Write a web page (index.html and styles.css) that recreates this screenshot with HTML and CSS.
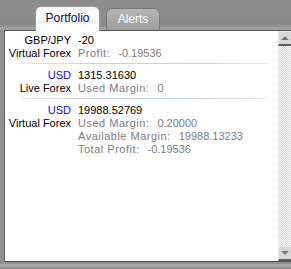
FILE: index.html
```html
<!DOCTYPE html>
<html lang="en">
<head>
  <meta charset="UTF-8">
  <title>Portfolio</title>
  <link rel="stylesheet" href="styles.css">
</head>
<body>
  <div class="tabs">
    <div class="tab active">Portfolio</div>
    <div class="tab">Alerts</div>
  </div>

  <div class="panel">
    <div class="content">
      <div class="row first">
        <div class="names">
          <div>GBP/JPY</div>
          <div>Virtual Forex</div>
        </div>
        <div class="values">
          <div class="num">-20</div>
          <div class="muted">Profit:<span class="val">-0.19536</span></div>
        </div>
      </div>
      <div class="sep"></div>

      <div class="row">
        <div class="names">
          <div class="cur">USD</div>
          <div>Live Forex</div>
        </div>
        <div class="values">
          <div class="num">1315.31630</div>
          <div class="muted">Used Margin:<span class="val">0</span></div>
        </div>
      </div>
      <div class="sep"></div>

      <div class="row">
        <div class="names">
          <div class="cur">USD</div>
          <div>Virtual Forex</div>
        </div>
        <div class="values">
          <div class="num">19988.52769</div>
          <div class="muted">Used Margin:<span class="val">0.20000</span></div>
          <div class="muted">Available Margin:<span class="val">19988.13233</span></div>
          <div class="muted">Total Profit:<span class="val">-0.19536</span></div>
        </div>
      </div>
    </div>

    <div class="scrollbar">
      <div class="arrow up"></div>
      <div class="track"></div>
      <div class="arrow down"></div>
    </div>
  </div>
  <div class="foot"></div>
</body>
</html>
```

FILE: styles.css
```css
body {
  margin: 0;
  background: #8f8f8f;
  font-family: "Liberation Sans", Arial, sans-serif;
  font-size: 11px;
  overflow: hidden;
}
.tabs {
  display: flex;
  align-items: flex-end;
  gap: 6px;
  height: 30px;
  padding-left: 35px;
  background: linear-gradient(#8c8c8c 0, #8c8c8c 20px, #888 24px, #a4a4a4 29px);
}
.tab {
  width: 52px;
  height: 21px;
  line-height: 21px;
  text-align: center;
  font-size: 12px;
  border: 1px solid #7a7a7a;
  border-bottom: none;
  border-radius: 6px 6px 0 0;
  background: linear-gradient(#b4b4b4, #9c9c9c);
  color: #fff;
}
.tab.active {
  width: 63px;
  height: 24px;
  line-height: 23px;
  border-color: #9a9a9a;
  background: linear-gradient(#f6f6f6 0, #fff 12px, #ececec 15px, #fff 18px);
  color: #10104a;
  position: relative;
  z-index: 1;
  margin-bottom: -1px;
}
.panel {
  display: flex;
  height: 230px;
  margin-left: 4px;
  border-top: 1px solid #555;
  border-left: 1px solid #606060;
  border-bottom: 1px solid #505050;
}
.content {
  flex: 1;
  background: #fff;
}
.row {
  display: flex;
  gap: 7px;
  padding: 5px 0 3px;
  line-height: 13px;
}
.row.first {
  padding-top: 3px;
}
.names {
  width: 66px;
  text-align: right;
  color: #000;
}
.cur {
  color: #1010e8;
}
.num {
  color: #000;
}
.muted {
  color: #7c7c84;
  letter-spacing: 0.5px;
}
.val {
  margin-left: 8px;
  letter-spacing: 0;
}
.sep {
  height: 1px;
  margin: 0 10px 0 17px;
  background: linear-gradient(90deg, #e6e6e6, #c4ccf2 35%, #c8d0f2 65%, #e6e6e6);
}
.scrollbar {
  width: 13px;
  display: flex;
  flex-direction: column;
}
.arrow {
  height: 12px;
  background: #d8d8d8;
  border: 1px solid #ececec;
  border-right: none;
  border-bottom: 2px solid #5a5a5a;
  display: flex;
  align-items: center;
  justify-content: center;
}
.arrow::before {
  content: "";
  width: 0;
  height: 0;
  border-left: 4px solid transparent;
  border-right: 4px solid transparent;
}
.arrow.up::before {
  border-bottom: 4px solid #7a7a7a;
}
.arrow.down::before {
  border-top: 4px solid #7a7a7a;
}
.track {
  flex: 1;
  background-color: #fff;
  background-image: repeating-conic-gradient(#d4d4d4 0 25%, #fff 0 50%);
  background-size: 2px 2px;
}
.foot {
  height: 3px;
  margin-top: 2px;
  background: #a8a8a8;
}
```
